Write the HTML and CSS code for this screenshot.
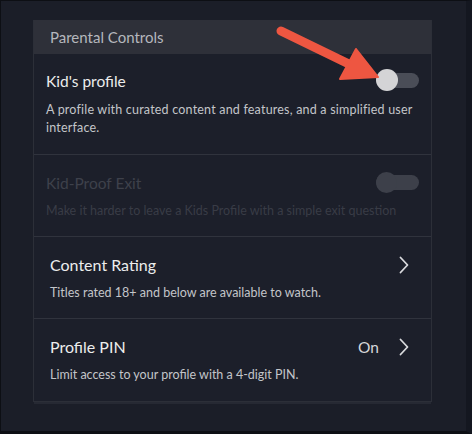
FILE: index.html
```html
<!DOCTYPE html>
<html>
<head>
<meta charset="utf-8">
<link rel="stylesheet" href="styles.css">
</head>
<body>
<div class="screen">
  <section class="panel">
    <div class="panel-head">Parental Controls</div>
    <div class="row row-first">
      <div class="row-top">
        <span class="title">Kid's profile</span>
        <span class="toggle"><span class="knob"></span></span>
      </div>
      <p class="desc">A profile with curated content and features, and a simplified user interface.</p>
    </div>
    <div class="row disabled">
      <div class="row-top">
        <span class="title">Kid-Proof Exit</span>
        <span class="toggle off"><span class="knob"></span></span>
      </div>
      <p class="desc">Make it harder to leave a Kids Profile with a simple exit question</p>
    </div>
    <div class="row wide">
      <div class="row-top">
        <span class="title big">Content Rating</span>
        <svg class="chev" width="10" height="18" viewBox="0 0 10 18"><path d="M1.5 1.5 L8.5 9 L1.5 16.5" fill="none" stroke="#d9dadd" stroke-width="1.8" stroke-linecap="round" stroke-linejoin="round"/></svg>
      </div>
      <p class="desc">Titles rated 18+ and below are available to watch.</p>
    </div>
    <div class="row wide last">
      <div class="row-top">
        <span class="title big">Profile PIN</span>
        <span class="value">On</span>
        <svg class="chev" width="10" height="18" viewBox="0 0 10 18"><path d="M1.5 1.5 L8.5 9 L1.5 16.5" fill="none" stroke="#d9dadd" stroke-width="1.8" stroke-linecap="round" stroke-linejoin="round"/></svg>
      </div>
      <p class="desc">Limit access to your profile with a 4-digit PIN.</p>
    </div>
  </section>
  <svg class="arrow" width="472" height="434" viewBox="0 0 472 434">
    <line x1="280" y1="30" x2="352" y2="65" stroke="#ee5641" stroke-width="9" stroke-linecap="round"/>
    <polygon points="377,76 339,78 355,48" fill="#ee5641" stroke="#ee5641" stroke-width="2" stroke-linejoin="round"/>
  </svg>
</div>
</body>
</html>
```
FILE: styles.css
```css
* { box-sizing: border-box; }
html, body { margin: 0; padding: 0; }
body {
  width: 472px;
  height: 434px;
  background: #1b1e28;
  font-family: Lato, "Noto Sans", sans-serif;
  overflow: hidden;
}
.screen {
  position: relative;
  width: 472px;
  height: 434px;
  border: 1px solid #0d0f14;
  border-right: 6px solid #141720;
  border-bottom: 3px solid #0d0f14;
  padding: 19px 0 0 32px;
}
.panel {
  width: 399px;
  border: 1px solid #2c2f38;
  border-top: none;
  background: #1c1f2a;
  box-shadow: 0 3px 0 -1px #262933;
}
.panel-head {
  height: 34px;
  background: #2e3039;
  color: #b5b7bd;
  font-size: 15px;
  padding-left: 16px;
  line-height: 34px;
}
.row {
  border-bottom: 1px solid #30333d;
  padding: 17px 12px 16px 12px;
}
.row.row-first { padding-top: 16px; padding-bottom: 17px; }
.row.wide { padding-left: 16px; padding-top: 17px; padding-bottom: 16px; }
.row.last { border-bottom: none; padding-bottom: 17px; }
.row-top {
  display: flex;
  align-items: center;
  height: 21px;
}
.title {
  flex: 1;
  color: #eceded;
  font-size: 15.5px;
}
.title.big { font-size: 16px; }
.desc {
  margin: 9px 0 0 0;
  color: #c3c5c9;
  font-size: 12.5px;
  line-height: 18px;
}
.row-first .desc { margin-top: 10px; letter-spacing: 0.2px; }
.disabled .title { color: #3e414b; }
.disabled .desc { color: #393c46; }
.toggle {
  position: relative;
  width: 43px;
  height: 15px;
  border-radius: 8px;
  background: #4a4d57;
}
.knob {
  position: absolute;
  left: 0;
  top: -4px;
  width: 22px;
  height: 22px;
  border-radius: 50%;
  background: #d4d4d6;
}
.toggle.off { background: #3d404a; }
.toggle.off .knob { background: #3d404a; top: -3px; width: 21px; height: 21px; }
.value {
  color: #d5d6d9;
  font-size: 15.5px;
  margin-right: 20px;
}
.chev { margin-right: 10px; display: block; }
.arrow {
  position: absolute;
  left: 0;
  top: 0;
  pointer-events: none;
}
```
